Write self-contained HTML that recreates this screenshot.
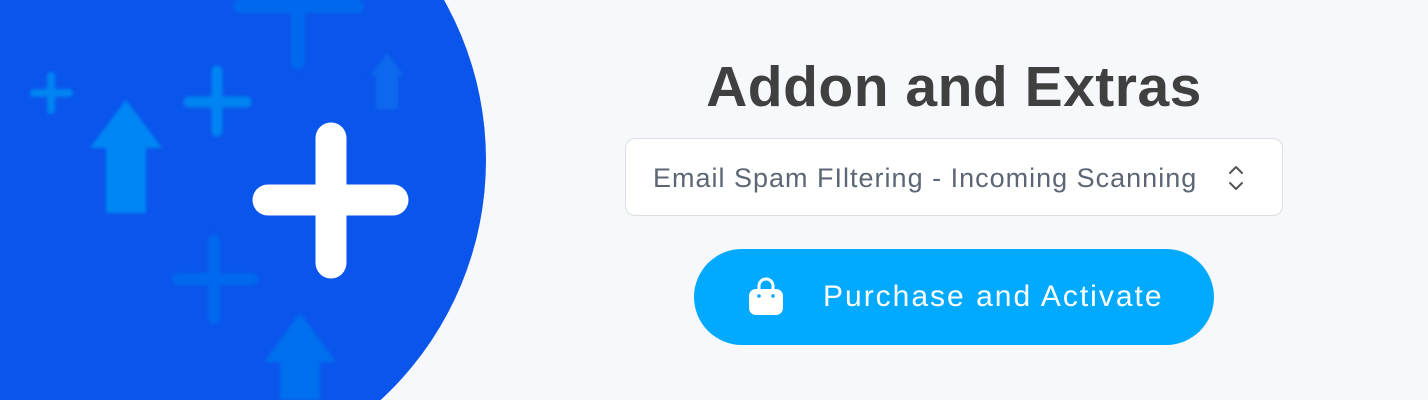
<!DOCTYPE html>
<html><head><style>
html,body{margin:0;padding:0;width:1428px;height:400px;overflow:hidden;background:#f7f8fc;font-family:"Liberation Sans",sans-serif;position:relative}
.t{position:absolute;left:554px;width:800px;top:54px;text-align:center;font-weight:bold;font-size:57px;line-height:66px;color:#404040;letter-spacing:0.5px}
.sel{position:absolute;left:625px;top:138px;width:656px;height:76px;border:1px solid #dcdfe4;border-radius:10px;background:#fff;box-sizing:content-box}
.sel span{position:absolute;left:27px;top:23px;font-size:27px;line-height:32px;color:#5c6675;letter-spacing:1px;white-space:nowrap}
.btn{position:absolute;left:694px;top:249px;width:520px;height:96px;border-radius:48px;background:#02aaff}
.btn span{position:absolute;left:129px;top:31px;font-size:30px;line-height:34px;color:#fff;letter-spacing:2px;white-space:nowrap}
</style></head><body>
<svg width="500" height="400" style="position:absolute;left:0;top:0">
<defs><filter id="b"><feGaussianBlur stdDeviation="1.5"/></filter></defs>
<circle cx="160" cy="160" r="326" fill="#0a55eb"/>
<g filter="url(#b)" stroke-linecap="round">
<g stroke="#0684f3"><path d="M34 93H69M51 76V110" stroke-width="8"/>
<path d="M189 102H246M217 71V131" stroke-width="11"/></g>
<path d="M126 100L162 148H146V213H106V148H90Z" fill="#0586f5"/>
<g stroke="#0569ef"><path d="M178 279H252M214 241V318" stroke-width="12"/>
<path d="M240 6H357M298 6V62" stroke-width="14"/></g>
<path d="M387 53L404 76H398V109H376V76H370Z" fill="#0769ee"/>
<path d="M300 313L336 362H320V400H280V362H264Z" fill="#0670ef"/>
</g>
<path d="M268 200H393M331 138V263" stroke="#fff" stroke-width="31" stroke-linecap="round"/>
</svg>
<div class="t">Addon and Extras</div>
<div class="sel"><span>Email Spam FIltering - Incoming Scanning</span>
<svg width="20" height="30" style="position:absolute;left:600px;top:24px"><path d="M4 10L10 4L16 10M4 20L10 26L16 20" stroke="#555" stroke-width="2" fill="none" stroke-linecap="round" stroke-linejoin="round"/></svg></div>
<div class="btn">
<svg width="40" height="44" style="position:absolute;left:52px;top:25px"><path d="M13 16V12a7 7 0 0 1 14 0v4" stroke="#fff" stroke-width="3" fill="none"/><rect x="3" y="15" width="34" height="26" rx="7" fill="#fff"/><circle cx="13" cy="22" r="1.8" fill="#02aaff"/><circle cx="27" cy="22" r="1.8" fill="#02aaff"/></svg>
<span>Purchase and Activate</span></div>
</body></html>
